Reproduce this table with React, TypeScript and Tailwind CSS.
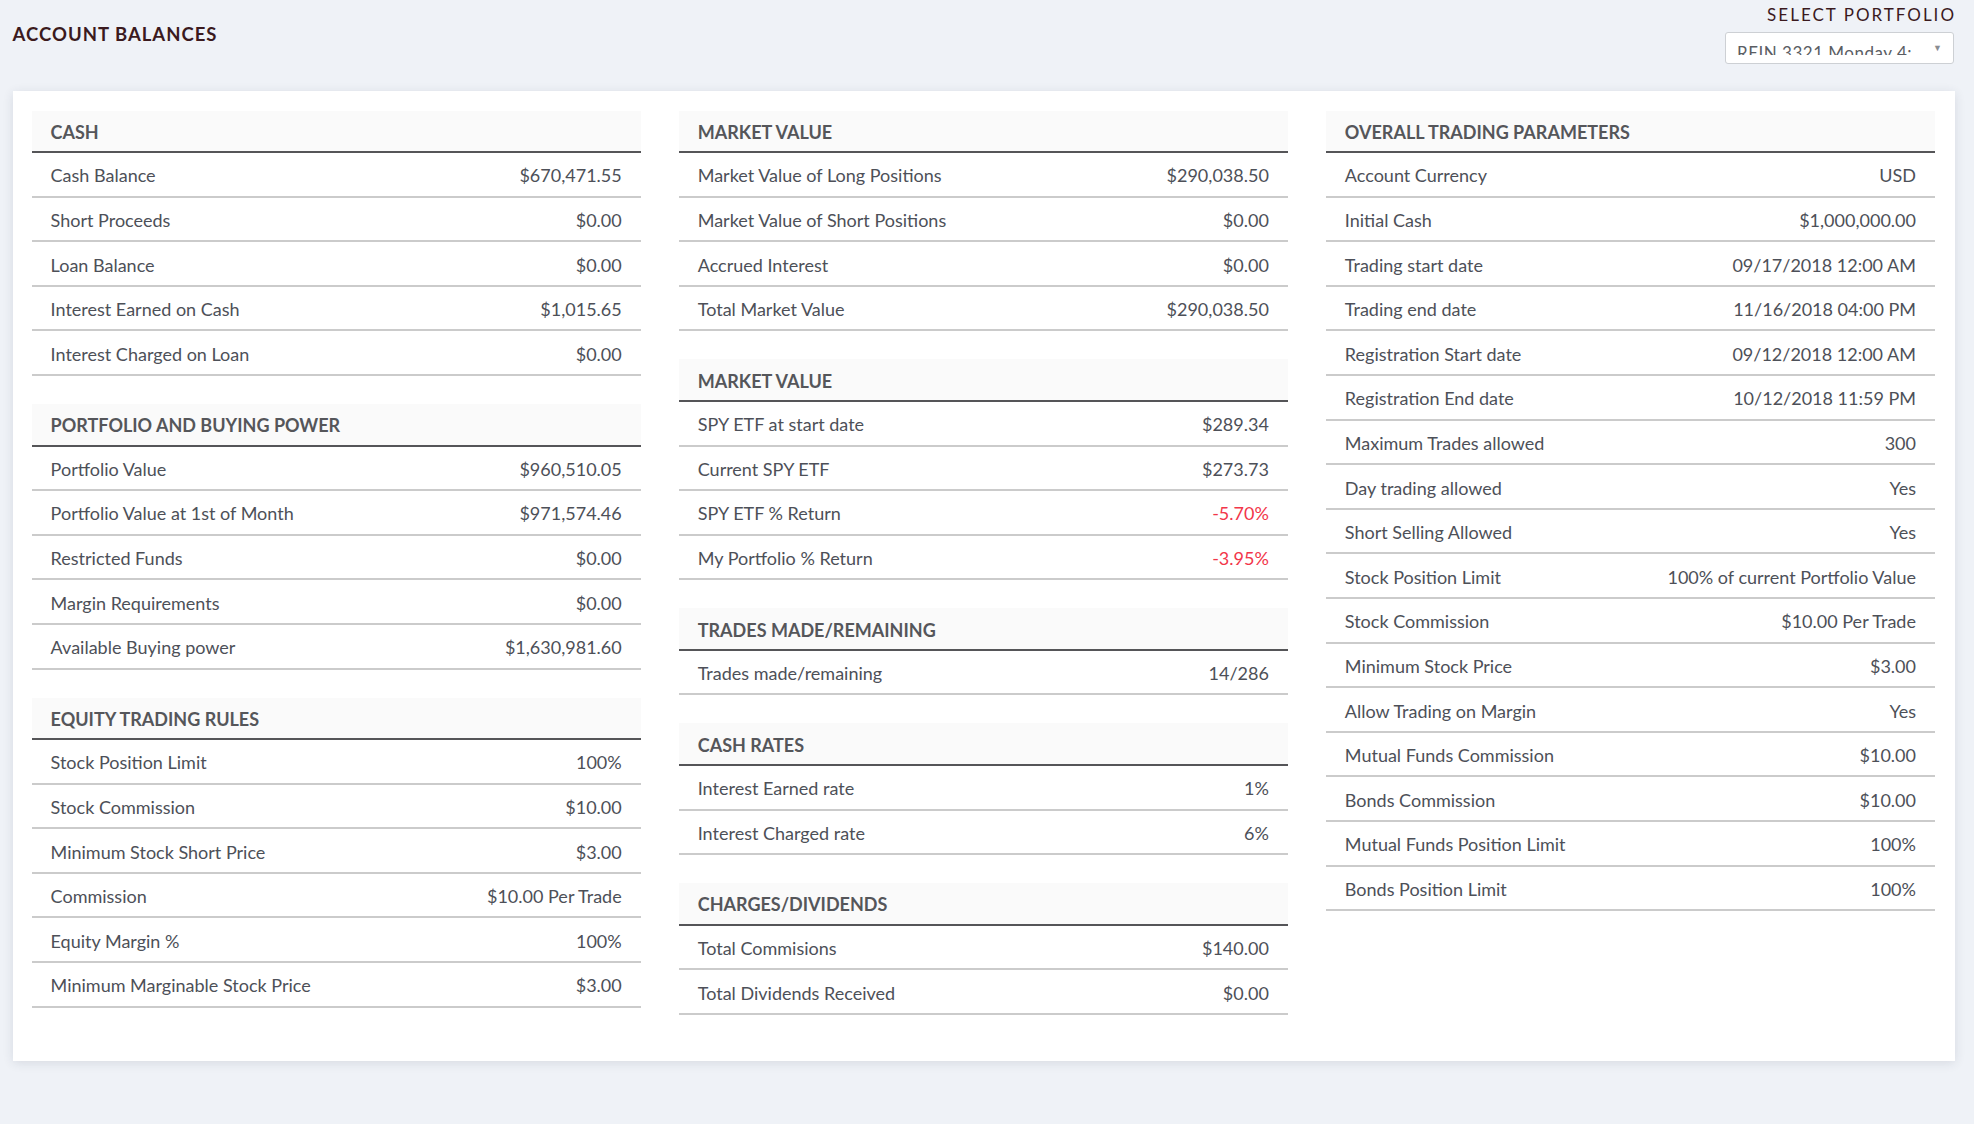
import React from "react";

type Row = { label: string; value: string; red?: boolean };
type Section = { title: string; rows: Row[] };

const col1: Section[] = [
  {
    title: "CASH",
    rows: [
      { label: "Cash Balance", value: "$670,471.55" },
      { label: "Short Proceeds", value: "$0.00" },
      { label: "Loan Balance", value: "$0.00" },
      { label: "Interest Earned on Cash", value: "$1,015.65" },
      { label: "Interest Charged on Loan", value: "$0.00" },
    ],
  },
  {
    title: "PORTFOLIO AND BUYING POWER",
    rows: [
      { label: "Portfolio Value", value: "$960,510.05" },
      { label: "Portfolio Value at 1st of Month", value: "$971,574.46" },
      { label: "Restricted Funds", value: "$0.00" },
      { label: "Margin Requirements", value: "$0.00" },
      { label: "Available Buying power", value: "$1,630,981.60" },
    ],
  },
  {
    title: "EQUITY TRADING RULES",
    rows: [
      { label: "Stock Position Limit", value: "100%" },
      { label: "Stock Commission", value: "$10.00" },
      { label: "Minimum Stock Short Price", value: "$3.00" },
      { label: "Commission", value: "$10.00 Per Trade" },
      { label: "Equity Margin %", value: "100%" },
      { label: "Minimum Marginable Stock Price", value: "$3.00" },
    ],
  },
];

const col2: Section[] = [
  {
    title: "MARKET VALUE",
    rows: [
      { label: "Market Value of Long Positions", value: "$290,038.50" },
      { label: "Market Value of Short Positions", value: "$0.00" },
      { label: "Accrued Interest", value: "$0.00" },
      { label: "Total Market Value", value: "$290,038.50" },
    ],
  },
  {
    title: "MARKET VALUE",
    rows: [
      { label: "SPY ETF at start date", value: "$289.34" },
      { label: "Current SPY ETF", value: "$273.73" },
      { label: "SPY ETF % Return", value: "-5.70%", red: true },
      { label: "My Portfolio % Return", value: "-3.95%", red: true },
    ],
  },
  {
    title: "TRADES MADE/REMAINING",
    rows: [{ label: "Trades made/remaining", value: "14/286" }],
  },
  {
    title: "CASH RATES",
    rows: [
      { label: "Interest Earned rate", value: "1%" },
      { label: "Interest Charged rate", value: "6%" },
    ],
  },
  {
    title: "CHARGES/DIVIDENDS",
    rows: [
      { label: "Total Commisions", value: "$140.00" },
      { label: "Total Dividends Received", value: "$0.00" },
    ],
  },
];

const col3: Section[] = [
  {
    title: "OVERALL TRADING PARAMETERS",
    rows: [
      { label: "Account Currency", value: "USD" },
      { label: "Initial Cash", value: "$1,000,000.00" },
      { label: "Trading start date", value: "09/17/2018 12:00 AM" },
      { label: "Trading end date", value: "11/16/2018 04:00 PM" },
      { label: "Registration Start date", value: "09/12/2018 12:00 AM" },
      { label: "Registration End date", value: "10/12/2018 11:59 PM" },
      { label: "Maximum Trades allowed", value: "300" },
      { label: "Day trading allowed", value: "Yes" },
      { label: "Short Selling Allowed", value: "Yes" },
      { label: "Stock Position Limit", value: "100% of current Portfolio Value" },
      { label: "Stock Commission", value: "$10.00 Per Trade" },
      { label: "Minimum Stock Price", value: "$3.00" },
      { label: "Allow Trading on Margin", value: "Yes" },
      { label: "Mutual Funds Commission", value: "$10.00" },
      { label: "Bonds Commission", value: "$10.00" },
      { label: "Mutual Funds Position Limit", value: "100%" },
      { label: "Bonds Position Limit", value: "100%" },
    ],
  },
];

function SectionTable({ s }: { s: Section }) {
  return (
    <div className="mb-[28px]">
      <div className="h-[42.5px] bg-[#fafafa] border-b-[2.5px] border-[#555558] flex items-center px-[19px] pt-[2px]">
        <span className="text-[18px] font-bold text-[#55565a] leading-none">{s.title}</span>
      </div>
      {s.rows.map((r, i) => (
        <div
          key={i}
          className="h-[44.6px] border-b-2 border-[#cbcbcb] flex items-center justify-between px-[19px] pt-[3px] text-[18px] text-[#4d5058]"
        >
          <span>{r.label}</span>
          <span className={r.red ? "text-[#f2364a]" : ""}>{r.value}</span>
        </div>
      ))}
    </div>
  );
}

export default function App() {
  return (
    <div
      className="w-[1974px] h-[1124px] bg-[#eff2f7] overflow-hidden"
      style={{ fontFamily: "Lato, 'Open Sans', sans-serif" }}
    >
      <div className="h-[90.6px] flex justify-between items-start">
        <div className="pl-[12.6px] pt-[22px] text-[18.5px] leading-[24px] font-bold tracking-[1px] text-[#3b1a1e]">
          ACCOUNT BALANCES
        </div>
        <div className="pr-[20px] flex flex-col items-end">
          <div className="mt-[4px] text-[17px] leading-[22px] tracking-[2px] text-[#3b1a1e] mr-[-2px]">
            SELECT PORTFOLIO
          </div>
          <div className="mt-[6px] w-[229px] h-[32px] bg-white border border-[#cdd0d4] rounded-[3px] relative">
            <div className="absolute left-[11px] top-[11px] h-[11px] w-[185px] overflow-hidden">
              <div className="text-[17px] leading-[17px] tracking-[0.5px] text-[#5a5d63] whitespace-nowrap">
                REIN 3321 Monday 4:
              </div>
            </div>
            <span className="absolute right-[11px] top-[10px] text-[9px] leading-none text-[#8a8d92]">▼</span>
          </div>
        </div>
      </div>
      <div className="ml-[12.6px] w-[1942.4px] bg-white shadow-[0_2px_10px_rgba(40,50,70,0.12)] pt-[20px] pb-[18px] pl-[19px] pr-[20px] grid grid-cols-3 gap-x-[38px] items-start">
        <div>
          {col1.map((s, i) => (
            <SectionTable key={i} s={s} />
          ))}
        </div>
        <div>
          {col2.map((s, i) => (
            <SectionTable key={i} s={s} />
          ))}
        </div>
        <div>
          {col3.map((s, i) => (
            <SectionTable key={i} s={s} />
          ))}
        </div>
      </div>
    </div>
  );
}
